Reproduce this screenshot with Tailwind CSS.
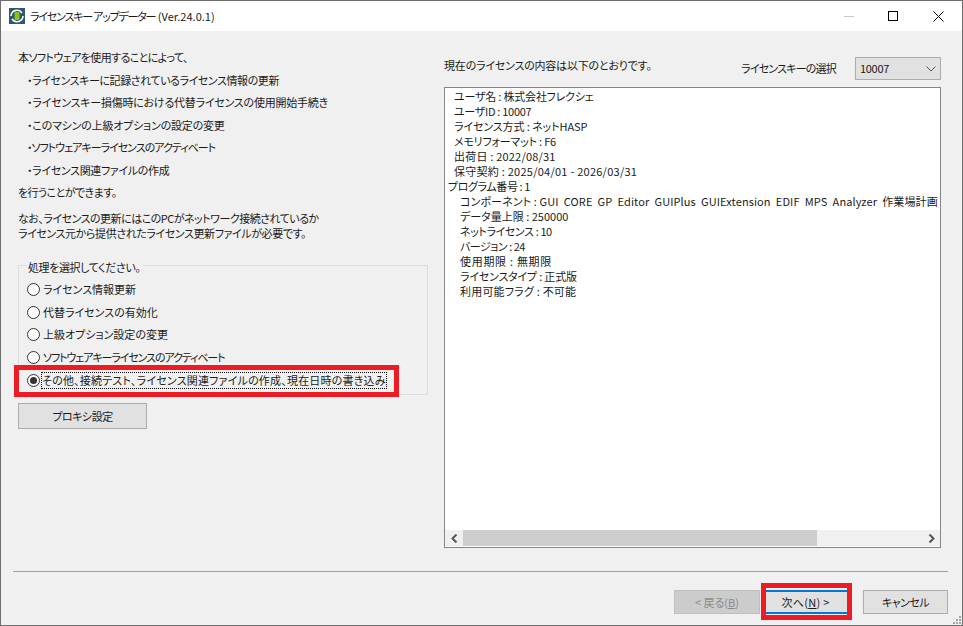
<!DOCTYPE html>
<html lang="ja"><head><meta charset="utf-8"><script src="https://cdn.jsdelivr.net/npm/@tailwindcss/browser@4"></script></head>
<body class="m-0 overflow-hidden">
<div class="w-[963px] h-[626px] relative flex flex-col bg-[#f0f0f0] border border-[#6e6e6e] text-[11px] text-[#1a1a1a] font-['Noto_Sans_CJK_JP','Noto_Sans',sans-serif] [font-feature-settings:'palt'] leading-[15px]">
  <div class="h-[30px] bg-white flex items-center shrink-0">
    <svg class="ml-[8px] w-[16px] h-[16px]" viewBox="0 0 16 16"><rect width="16" height="16" fill="#2f5a6b"/><rect x="5.5" y="4" width="5" height="8" rx="1" fill="#8cc21c"/><path d="M2 8a6 6 0 0 1 11-3M14 8a6 6 0 0 1-11 3" fill="none" stroke="#fff" stroke-width="1.6"/></svg>
    <span class="ml-[5px]"><span class="tracking-[-1.2px]">ライセンスキー アップデーター</span> (Ver.24.0.1)</span>
    <div class="ml-auto flex items-center">
      <div class="w-[10px] h-px bg-[#c8c8c8] mr-[34px]"></div>
      <div class="w-[10px] h-[10px] border border-black mr-[35px]"></div>
      <svg class="w-[11px] h-[11px] mr-[18px]" viewBox="0 0 11 11"><path d="M0.5 0.5l10 10M10.5 0.5l-10 10" stroke="#000" fill="none"/></svg>
    </div>
  </div>
  <div class="flex h-[540px] shrink-0">
    <div class="w-[443px] pl-[17px] flex flex-col shrink-0">
      <p class="mt-[19px] h-[15px] tracking-[-0.6px]">本ソフトウェアを使用することによって、</p>
      <ul class="pl-[9px] flex flex-col">
        <li class="mt-[7.5px] h-[15px] tracking-[-0.42px]">・ライセンスキーに記録されているライセンス情報の更新</li>
        <li class="mt-[7.5px] h-[15px] tracking-[-0.23px]">・ライセンスキー損傷時における代替ライセンスの使用開始手続き</li>
        <li class="mt-[7.5px] h-[15px] tracking-[-0.2px]">・このマシンの上級オプションの設定の変更</li>
        <li class="mt-[7.5px] h-[15px] tracking-[-1px]">・ソフトウェアキーライセンスのアクティベート</li>
        <li class="mt-[7.5px] h-[15px] tracking-[-0.33px]">・ライセンス関連ファイルの作成</li>
      </ul>
      <p class="mt-[7.5px] h-[15px] tracking-[-0.55px]">を行うことができます。</p>
      <p class="mt-[11px] h-[15px] tracking-[-0.5px]">なお、ライセンスの更新にはこのPCがネットワーク接続されているか</p>
      <p class="h-[15px] tracking-[-0.4px]">ライセンス元から提供されたライセンス更新ファイルが必要です。</p>
      <div class="mt-[24px] w-[410px] h-[130px] border border-[#dcdcdc] relative pl-[8px] pt-[12px] flex flex-col">
        <span class="absolute left-[7px] -top-[6px] bg-[#f0f0f0] px-[2px] tracking-[-0.4px]">処理を選択してください。</span>
        <label class="h-[22.75px] flex items-center gap-[3px] shrink-0"><span class="w-[13px] h-[13px] rounded-full border border-[#333] bg-white"></span>ライセンス情報更新</label>
        <label class="h-[22.75px] flex items-center gap-[3px] shrink-0"><span class="w-[13px] h-[13px] rounded-full border border-[#333] bg-white"></span>代替ライセンスの有効化</label>
        <label class="h-[22.75px] flex items-center gap-[3px] shrink-0"><span class="w-[13px] h-[13px] rounded-full border border-[#333] bg-white"></span>上級オプション設定の変更</label>
        <label class="h-[22.75px] flex items-center gap-[3px] tracking-[-1.1px] shrink-0"><span class="w-[13px] h-[13px] rounded-full border border-[#333] bg-white"></span>ソフトウェアキーライセンスのアクティベート</label>
        <label class="h-[22.75px] flex items-center gap-[2px] tracking-[0.2px] shrink-0"><span class="w-[13px] h-[13px] rounded-full border border-[#333] bg-white flex items-center justify-center"><span class="w-[7px] h-[7px] rounded-full bg-[#333]"></span></span><span class="outline outline-dotted outline-1 outline-black h-[15px]">その他、接続テスト、ライセンス関連ファイルの作成、現在日時の書き込み</span></label>
      </div>
      <button class="mt-[8px] w-[129px] h-[26px] bg-[#e1e1e1] border border-[#adadad] text-[11px] tracking-[-0.5px]">プロキシ設定</button>
    </div>
    <div class="w-[497px] flex flex-col shrink-0">
      <div class="h-[56px] flex items-start shrink-0">
        <span class="mt-[27px] tracking-[-0.2px]">現在のライセンスの内容は以下のとおりです。</span>
        <span class="ml-auto mt-[30px] tracking-[-0.8px]">ライセンスキーの選択</span>
        <div class="ml-[19px] mt-[26px] w-[86px] h-[23px] border border-[#adadad] bg-[#e1e1e1] flex items-center pl-[4px] shrink-0 tracking-[-0.3px]">10007
          <svg class="ml-auto mr-[4px] w-[10px] h-[6px]" viewBox="0 0 10 6"><path d="M0.5 0.5l4.5 4.5 4.5-4.5" fill="none" stroke="#555"/></svg>
        </div>
      </div>
      <div class="h-[461px] border border-[#82878c] bg-white flex flex-col shrink-0">
        <div class="h-[442px] overflow-hidden pt-[1px] pl-[2px] whitespace-nowrap flex flex-col shrink-0">
          <div class="pl-[7px]">
            <p class="tracking-[-0.2px]">ユーザ名 : 株式会社フレクシェ</p><p class="tracking-[-0.3px]">ユーザID : 10007</p><p class="tracking-[-0.1px]">ライセンス方式 : ネットHASP</p><p class="tracking-[-0.2px]">メモリフォーマット : F6</p><p class="tracking-[0.2px]">出荷日 : 2022/08/31</p><p class="tracking-[0.25px]">保守契約 : 2025/04/01 - 2026/03/31</p>
          </div>
          <p class="pl-[1px] tracking-[-0.4px]">プログラム番号 : 1</p>
          <div class="pl-[13px]">
            <p class="tracking-[0.11px]">コンポーネント : GUI&nbsp; CORE&nbsp; GP&nbsp; Editor&nbsp; GUIPlus&nbsp; GUIExtension&nbsp; EDIF&nbsp; MPS&nbsp; Analyzer&nbsp; 作業場計画</p><p>データ量上限 : 250000</p><p class="tracking-[-0.4px]">ネットライセンス : 10</p><p class="tracking-[-0.5px]">バージョン : 24</p><p class="tracking-[0.7px]">使用期限 : 無期限</p><p class="tracking-[-0.2px]">ライセンスタイプ : 正式版</p><p class="tracking-[0.2px]">利用可能フラグ : 不可能</p>
          </div>
        </div>
        <div class="h-[16px] flex bg-[#f0f0f0] shrink-0">
          <div class="w-[18px] flex items-center justify-center"><svg class="w-[7px] h-[9px]" viewBox="0 0 7 9"><path d="M5.5 0.5L1.5 4.5l4 4" fill="none" stroke="#555" stroke-width="2"/></svg></div>
          <div class="w-[354px] bg-[#cdcdcd]"></div>
          <div class="ml-auto w-[18px] flex items-center justify-center"><svg class="w-[7px] h-[9px]" viewBox="0 0 7 9"><path d="M1.5 0.5l4 4-4 4" fill="none" stroke="#555" stroke-width="2"/></svg></div>
        </div>
      </div>
    </div>
  </div>
  <div class="h-[2px] ml-[12px] w-[935px] border-t border-[#a0a0a0] border-b-white shrink-0"></div>
  <div class="flex justify-end items-start pt-[17px] pr-[14px]">
    <button class="w-[86px] h-[24px] bg-[#cccccc] border border-[#bfbfbf] text-[#8a8a8a] text-[11px]">&lt; 戻る(<u>B</u>)</button>
    <button class="w-[86px] h-[24px] ml-[4px] bg-[#e1e1e1] border-y-2 border-[#0078d7] text-[11px] tracking-[0.3px] pr-[3px]">次へ(<u>N</u>) &gt;</button>
    <button class="w-[85px] h-[24px] ml-[13px] bg-[#e1e1e1] border border-[#adadad] text-[11px] tracking-[-0.5px]">キャンセル</button>
  </div>
  <div class="absolute left-[13px] top-[364px] w-[385px] h-[32px] border-[5px] border-[#ed1c24]"></div>
  <div class="absolute left-[760px] top-[582px] w-[91px] h-[37px] border-[5px] border-[#ed1c24]"></div>
  <svg class="absolute right-[1px] bottom-[1px] w-[8px] h-[8px]" viewBox="0 0 8 8" fill="#a8a8a8"><rect x="6" y="0" width="2" height="2"/><rect x="3" y="3" width="2" height="2"/><rect x="6" y="3" width="2" height="2"/><rect x="0" y="6" width="2" height="2"/><rect x="3" y="6" width="2" height="2"/><rect x="6" y="6" width="2" height="2"/></svg>
</div>
</body></html>
